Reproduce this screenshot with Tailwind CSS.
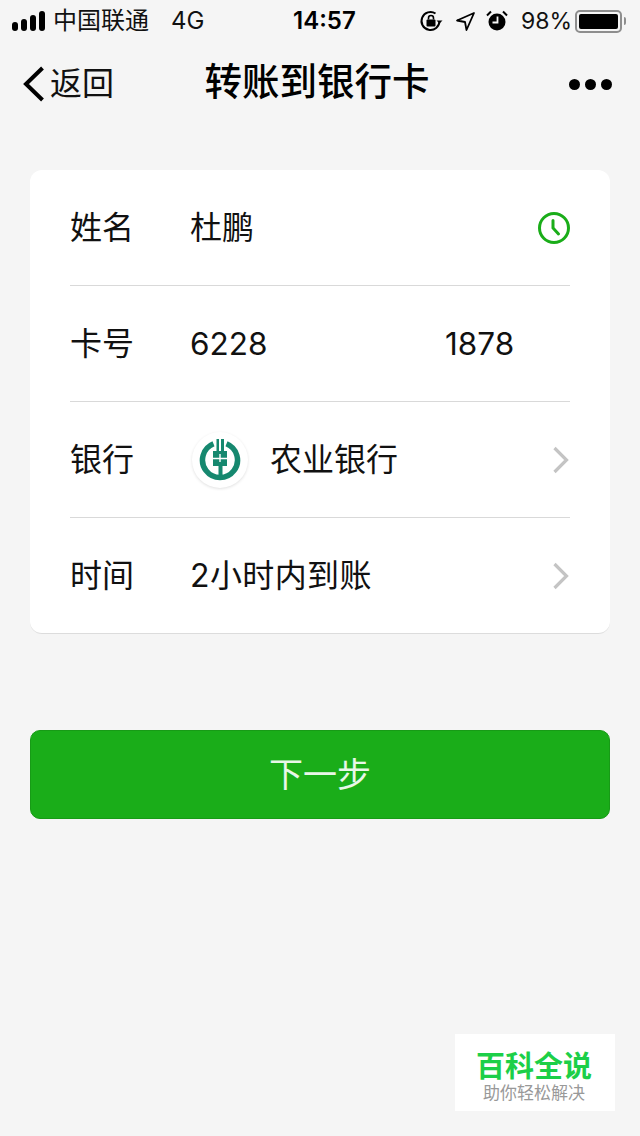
<!DOCTYPE html>
<html lang="zh-CN">
<head>
  <meta charset="UTF-8" />
  <meta name="viewport" content="width=device-width, initial-scale=1.0"/>
  <title>转账到银行卡</title>
  <script src="https://cdn.jsdelivr.net/npm/@tailwindcss/browser@4"></script>
</head>
<body class="relative w-[640px] h-[1136px] overflow-hidden bg-[#f5f5f5] text-black font-['Inter','Noto_Sans_CJK_SC',sans-serif]">

  <!-- status bar -->
  <div class="flex items-center h-10 pt-[2px] pl-3 text-[24px] leading-none text-[#111]">
    <div class="flex items-end gap-[3px] w-[33px] h-[20px]">
      <span class="w-[6px] h-[9px] rounded-full bg-black"></span>
      <span class="w-[6px] h-[12px] rounded-[3px] bg-black"></span>
      <span class="w-[6px] h-[16px] rounded-[3px] bg-black"></span>
      <span class="w-[6px] h-[20px] rounded-[3px] bg-black"></span>
    </div>
    <span class="ml-2 w-[96px] whitespace-nowrap">中国联通</span>
    <span class="ml-[22px] text-[24px] w-[40px]">4G</span>
    <span class="ml-[82px] w-[66px] font-semibold text-[24px] text-black whitespace-nowrap">14:57</span>
    <svg class="ml-[60px]" width="24" height="24" viewBox="0 0 24 24" fill="none">
      <path d="M20.5 12A9 9 0 1 1 16.5 4.5" stroke="#000" stroke-width="2"/>
      <path d="M23.5 11.5l-3 3-3-3z" fill="#000"/>
      <rect x="7.5" y="10.5" width="9" height="7" rx="1" fill="#000"/>
      <path d="M9.5 10.5V9a2.5 2.5 0 0 1 5 0v1.5" stroke="#000" stroke-width="1.6"/>
    </svg>
    <svg class="ml-[11px]" width="22" height="22" viewBox="0 0 22 22" fill="none">
      <path d="M20 3 3 10.5l8 1.5 1.5 8z" stroke="#000" stroke-width="1.8" stroke-linejoin="round"/>
    </svg>
    <svg class="ml-[10px]" width="22" height="22" viewBox="0 0 22 22" fill="none">
      <circle cx="11" cy="12" r="8.5" fill="#000"/>
      <path d="M11.5 6.5V12.5H6.5" stroke="#f5f5f5" stroke-width="1.8"/>
      <path d="M1 5.5 5 1.5M21 5.5 17 1.5" stroke="#000" stroke-width="2"/>
    </svg>
    <span class="ml-[13px] w-[48px] text-[23px] whitespace-nowrap">98%</span>
    <div class="ml-[6px] w-[47px] h-[23px] rounded-[5px] border-2 border-[#8e8e8e] p-[2px]">
      <div class="w-full h-full rounded-[2px] bg-black"></div>
    </div>
    <span class="ml-[2px] w-[2px] h-[8px] rounded-r-full bg-[#8e8e8e]"></span>
  </div>

  <!-- nav bar -->
  <div class="relative flex items-center justify-between h-[88px] pl-[23px] pr-[28px]">
    <div class="flex items-center">
      <svg width="22" height="36" viewBox="0 0 22 36" fill="none">
        <path d="M19.5 2 3 18l16.5 16" stroke="#000" stroke-width="4"/>
      </svg>
      <span class="ml-[5px] text-[32px] leading-none text-[#111]">返回</span>
    </div>
    <h1 class="absolute left-0 right-[6px] -translate-y-0.5 text-center text-[37.5px] leading-none font-medium pointer-events-none">转账到银行卡</h1>
    <div class="flex gap-[5px]">
      <span class="w-[11px] h-[11px] rounded-full bg-black"></span>
      <span class="w-[11px] h-[11px] rounded-full bg-black"></span>
      <span class="w-[11px] h-[11px] rounded-full bg-black"></span>
    </div>
  </div>

  <!-- form card -->
  <div class="mx-[30px] mt-[42px] h-[464px] rounded-[12px] bg-white border-b border-[#dcdcdc] px-10 text-[32px] leading-none text-[#111]">
    <div class="flex items-center h-[116px] border-b border-[#d9d9d9]">
      <span class="w-[120px]">姓名</span>
      <span>杜鹏</span>
      <svg class="ml-auto" width="32" height="32" viewBox="0 0 32 32" fill="none">
        <circle cx="16" cy="16" r="14.5" stroke="#1aad19" stroke-width="3"/>
        <path d="M15 8.5v7.5l5.5 6" stroke="#1aad19" stroke-width="3" stroke-linecap="round"/>
      </svg>
    </div>
    <div class="flex items-center h-[116px] border-b border-[#d9d9d9]">
      <span class="w-[120px]">卡号</span>
      <span class="w-[255px] text-[31.5px]">6228</span>
      <span class="text-[31.5px]">1878</span>
    </div>
    <div class="flex items-center h-[116px] border-b border-[#d9d9d9]">
      <span class="w-[120px]">银行</span>
      <div class="flex items-center justify-center ml-[2px] w-[56px] h-[56px] rounded-full bg-white shadow-[0_1px_3px_rgba(0,0,0,0.12)]">
        <svg width="42" height="42" viewBox="0 0 42 42" fill="none">
          <path d="M14.5 4.8a17.5 17.5 0 1 0 13 0" stroke="#16886f" stroke-width="5.5"/>
          <path d="M17.5 0h2.5v12h2V0h3v12h3v15h-4.500v12h-4V27H14V12h3.500z" fill="#16886f"/>
          <path d="M14 19.500h14M21 15v8" stroke="#fff" stroke-width="1.400"/>
        </svg>
      </div>
      <span class="ml-[22px]">农业银行</span>
      <svg class="ml-auto" width="18" height="28" viewBox="0 0 18 28" fill="none">
        <path d="M2.500 2 14.500 14 2.500 26" stroke="#c4c4c4" stroke-width="3.200"/>
      </svg>
    </div>
    <div class="flex items-center h-[115px]">
      <span class="w-[120px]">时间</span>
      <span class="tracking-[0.4px]">2小时内到账</span>
      <svg class="ml-auto" width="18" height="28" viewBox="0 0 18 28" fill="none">
        <path d="M2.500 2 14.500 14 2.500 26" stroke="#c4c4c4" stroke-width="3.200"/>
      </svg>
    </div>
  </div>

  <!-- next button -->
  <button class="block mx-[30px] mt-[96px] w-[580px] h-[89px] rounded-[10px] bg-[#1aad19] border border-[#179b16] text-[34px] leading-none text-white/90">下一步</button>

  <!-- watermark -->
  <div class="absolute left-[455px] top-[1034px] flex flex-col items-center w-[160px] h-[77px] pt-[18px] pr-[2px] bg-white">
    <span class="text-[29px] leading-[30px] font-bold text-[#1ccf48] whitespace-nowrap">百科全说</span>
    <span class="mt-[3px] text-[17px] leading-none text-[#999] whitespace-nowrap">助你轻松解决</span>
  </div>

</body>
</html>
